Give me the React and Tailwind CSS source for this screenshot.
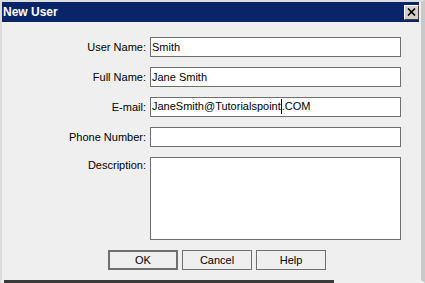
import React from "react";

function Field({ label, value, cursor }) {
  return (
    <div className="flex items-center h-[20px] mb-[10px]">
      <div className="w-[150px] pr-[4px] text-right text-[11px] text-black leading-none">{label}</div>
      <div className="w-[251px] h-[20px] bg-white border border-[#6f6f6f] flex items-center pl-[1px] text-[11px] text-black leading-none">
        {cursor ? (
          <span>
            JaneSmith@Tutorialspoint<span className="inline-block w-[1px] h-[15px] bg-black align-middle -mt-[2px]"></span>.COM
          </span>
        ) : (
          value
        )}
      </div>
    </div>
  );
}

export default function App() {
  return (
    <div
      className="w-[425px] h-[283px] bg-[#efefef] relative overflow-hidden"
      style={{ fontFamily: '"Liberation Sans", Arial, sans-serif' }}
    >
      <div className="absolute inset-0 border-t-2 border-l-2 border-[#dcdcdc] border-r-[4px] border-r-[#c9c9c9] border-b-[3px] border-b-[#efefef]"></div>
      <div className="relative ml-[2px] mr-[6px] mt-[2px] h-[20px] bg-[#0a246a] flex items-center justify-between">
        <span className="pl-[1px] text-white font-bold text-[12px] leading-none">New User</span>
        <div className="w-[15px] h-[15px] bg-[#d4d0c8] border border-t-white border-l-white border-r-[#404040] border-b-[#404040] flex items-center justify-center">
          <svg width="9" height="8" viewBox="0 0 9 8">
            <path d="M1 0.5 L8 7.5 M8 0.5 L1 7.5" stroke="#000" strokeWidth="1.6" />
          </svg>
        </div>
      </div>
      <div className="relative pt-[15px]">
        <Field label="User Name:" value="Smith" />
        <Field label="Full Name:" value="Jane Smith" />
        <Field label="E-mail:" cursor />
        <Field label="Phone Number:" value="" />
        <div className="flex">
          <div className="w-[150px] pr-[4px] pt-[3px] text-right text-[11px] text-black leading-none">Description:</div>
          <div className="w-[251px] h-[83px] bg-white border border-[#6f6f6f]"></div>
        </div>
        <div className="flex gap-[4px] pl-[108px] mt-[10px]">
          {["OK", "Cancel", "Help"].map((t, i) => (
            <div
              key={t}
              className={
                "w-[70px] h-[20px] flex items-center justify-center text-[11px] text-black leading-none bg-[#efefef] " +
                (i === 0 ? "border-2 border-[#6f6f6f]" : "border border-[#6f6f6f]")
              }
            >
              {t}
            </div>
          ))}
        </div>
      </div>
      <div className="absolute left-[4px] top-[280px] w-[330px] h-[3px] bg-[#3a3a3a]"></div>
    </div>
  );
}
